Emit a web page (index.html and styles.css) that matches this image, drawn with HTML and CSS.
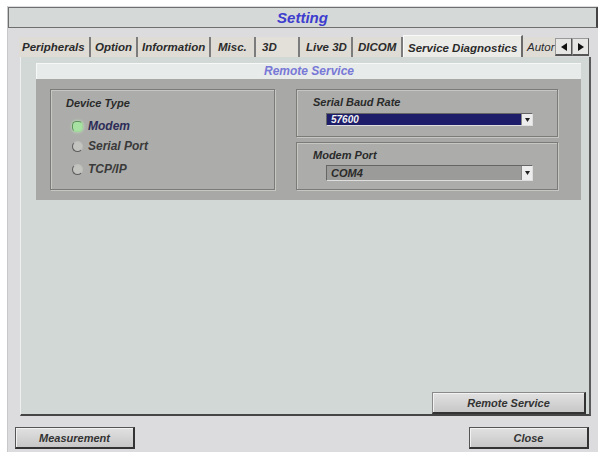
FILE: index.html
```html
<!DOCTYPE html>
<html lang="en">
<head>
    <meta charset="UTF-8">
    <title>Setting</title>
    <link rel="stylesheet" href="styles.css">
</head>
<body>
    <div class="window">
        <div class="titlebar">Setting</div>

        <div class="tabs">
            <div class="tab tab-peripherals">Peripherals</div>
            <div class="tab tab-option">Option</div>
            <div class="tab tab-information">Information</div>
            <div class="tab tab-misc">Misc.</div>
            <div class="tab tab-3d">3D</div>
            <div class="tab tab-live">Live 3D</div>
            <div class="tab tab-dicom">DICOM</div>
            <div class="tab tab-service active">Service Diagnostics</div>
            <div class="tab tab-auto">Autor</div>
            <div class="tab-arrow">
                <svg width="6" height="8" viewBox="0 0 6 8"><path d="M6 0 L0 4 L6 8 Z" fill="#111"/></svg>
            </div>
            <div class="tab-arrow">
                <svg width="6" height="8" viewBox="0 0 6 8"><path d="M0 0 L6 4 L0 8 Z" fill="#111"/></svg>
            </div>
        </div>

        <div class="page">
            <div class="group">
                <div class="group-title">Remote Service</div>
                <div class="group-body">
                    <div class="box device-box">
                        <div class="box-label">Device Type</div>
                        <div class="radio-list">
                            <div class="radio-row selected"><span class="radio on"></span>Modem</div>
                            <div class="radio-row"><span class="radio"></span>Serial Port</div>
                            <div class="radio-row"><span class="radio"></span>TCP/IP</div>
                        </div>
                    </div>
                    <div class="right-col">
                        <div class="box field-box">
                            <div class="box-label">Serial Baud Rate</div>
                            <div class="select select-dark">
                                <span class="select-value">57600</span>
                                <span class="select-btn">
                                    <svg width="5" height="4" viewBox="0 0 5 4"><path d="M0 0 L5 0 L2.5 4 Z" fill="#222"/></svg>
                                </span>
                            </div>
                        </div>
                        <div class="box field-box">
                            <div class="box-label">Modem Port</div>
                            <div class="select select-gray">
                                <span class="select-value">COM4</span>
                                <span class="select-btn">
                                    <svg width="5" height="4" viewBox="0 0 5 4"><path d="M0 0 L5 0 L2.5 4 Z" fill="#222"/></svg>
                                </span>
                            </div>
                        </div>
                    </div>
                </div>
            </div>
            <button class="btn btn-remote">Remote Service</button>
        </div>

        <div class="footer">
            <button class="btn btn-foot">Measurement</button>
            <button class="btn btn-foot">Close</button>
        </div>
    </div>
</body>
</html>
```

FILE: styles.css
```css
body {
    margin: 0;
    background: #ffffff;
    font-family: "Liberation Sans", Arial, sans-serif;
    font-style: italic;
    font-weight: bold;
    color: #2e2e2e;
}
.window {
    margin: 6px 0 0 7px;
    width: 591px;
    height: 446px;
    box-sizing: border-box;
    background: #dcdcdf;
    border-left: 1px solid #c8c8cb;
    display: flex;
    flex-direction: column;
}
.titlebar {
    height: 21px;
    margin-top: 1px;
    box-sizing: border-box;
    background: #d5d9d8;
    border: 1px solid #6e6e6e;
    border-right: 2px solid #444444;
    text-align: center;
    font-size: 15px;
    line-height: 19px;
    color: #3d3dce;
}

/* tab strip */
.tabs {
    display: flex;
    height: 20px;
    margin-top: 9px;
    padding-left: 11px;
}
.tab {
    box-sizing: border-box;
    height: 20px;
    padding-left: 4px;
    background: #dfdcd6;
    border-right: 2px solid #7c7c7c;
    font-size: 11.5px;
    line-height: 21px;
    white-space: nowrap;
    overflow: hidden;
    color: #2b2b2b;
}
.tab.active {
    height: 22px;
    margin-top: -2px;
    line-height: 24px;
    padding-left: 4px;
    background: #ebebe8;
    border-top: 1px solid #fafafa;
    border-left: 1px solid #fafafa;
    border-right: 2px solid #6a6a6a;
}
.tab-peripherals { width: 72px; padding-left: 3px; }
.tab-option { width: 47px; }
.tab-information { width: 73px; }
.tab-misc { width: 45px; padding-left: 7px; }
.tab-3d { width: 44px; padding-left: 6px; background: #e3e0da; }
.tab-live { width: 53px; padding-left: 6px; }
.tab-dicom { width: 50px; padding-left: 5px; }
.tab-service { width: 120px; }
.tab-auto { width: 32px; border-right: none; font-weight: normal; }
.tab-arrow {
    box-sizing: border-box;
    width: 17px;
    height: 18px;
    margin-top: 1px;
    display: flex;
    align-items: center;
    justify-content: center;
    background: #e6e6e4;
    border: 1px solid #9a9a9a;
    border-right-color: #555555;
    border-bottom: 2px solid #555555;
}

/* tab page */
.page {
    flex: 1;
    margin: 0 7px 0 12px;
    padding: 6px 3px 0 15px;
    box-sizing: border-box;
    background: #d2d8d6;
    border-left: 1px solid #eef0ef;
    border-right: 2px solid #5a5a5a;
    border-bottom: 2px solid #454545;
    display: flex;
    flex-direction: column;
}
.group {
    margin-right: 5px;
}
.group-title {
    height: 16px;
    box-sizing: border-box;
    background: #e7ebea;
    border-top: 1px solid #f6f8f7;
    border-left: 1px solid #f6f8f7;
    text-align: center;
    font-size: 12px;
    line-height: 15px;
    color: #7878d6;
}
.group-body {
    display: flex;
    gap: 21px;
    padding: 10px 23px 10px 14px;
    background: #a8a9a6;
}
.box {
    box-sizing: border-box;
    background: #acadaa;
    border: 1px solid #7b7b79;
    box-shadow: inset 1px 1px 0 #c6c6c3, 1px 1px 0 #c6c6c3;
}
.box-label {
    font-size: 11px;
    line-height: 13px;
    color: #2a2a2a;
}
.device-box {
    width: 225px;
    height: 101px;
    padding: 7px 0 0 15px;
}
.radio-list {
    display: flex;
    flex-direction: column;
    margin: 6px 0 0 6px;
}
.radio-row {
    display: flex;
    align-items: center;
    gap: 5px;
    height: 20px;
    font-size: 12px;
    color: #3a3a3a;
}
.radio-row:last-child {
    margin-top: 3px;
}
.radio-row.selected {
    color: #2c2c58;
}
.radio {
    width: 9px;
    height: 9px;
    border-radius: 50%;
    background: #c3c3c0;
    border: 1px solid #bdbdba;
    border-left-color: #5e5e5e;
    border-bottom-color: #5e5e5e;
}
.radio.on {
    background: #a8e2a2;
    border-color: #5f915f #9fd59a #9fd59a #5f915f;
    box-shadow: 0 0 3px #c4f0bd;
    border-radius: 40%;
}
.right-col {
    display: flex;
    flex-direction: column;
    gap: 5px;
}
.field-box {
    width: 262px;
    height: 48px;
    padding: 6px 0 0 16px;
}
.select {
    display: flex;
    align-items: center;
    justify-content: space-between;
    width: 207px;
    margin: 4px 0 0 13px;
    box-sizing: border-box;
    border-top: 1px solid #666;
    border-left: 1px solid #666;
    border-bottom: 1px solid #dedede;
    border-right: 1px solid #dedede;
}
.select-dark {
    height: 13px;
    background: #1d1d6a;
    color: #f2f2f2;
}
.select-gray {
    height: 16px;
    margin-top: 3px;
    background: #9b9c99;
    color: #2a2a2a;
}
.select-value {
    padding-left: 4px;
    font-size: 11px;
}
.select-dark .select-value {
    font-size: 10px;
}
.select-btn {
    width: 11px;
    height: 100%;
    box-sizing: border-box;
    display: flex;
    align-items: center;
    justify-content: center;
    background: #ededed;
    border-left: 1px solid #888;
}

/* buttons */
.btn {
    box-sizing: border-box;
    height: 22px;
    padding: 0;
    font-family: "Liberation Sans", Arial, sans-serif;
    font-style: italic;
    font-weight: bold;
    font-size: 11px;
    color: #333333;
    background: linear-gradient(#e1e1e1, #c7c7c7);
    border: 1px solid #555555;
    border-right: 2px solid #333333;
    border-bottom: 2px solid #333333;
    box-shadow: inset 1px 1px 0 #f2f2f2;
}
.btn-remote {
    align-self: flex-end;
    width: 154px;
    margin-top: auto;
    border-top-color: #8a8a8a;
    border-left-color: #8a8a8a;
}
.footer {
    display: flex;
    justify-content: space-between;
    height: 36px;
    box-sizing: border-box;
    padding: 11px 9px 0 7px;
}
.btn-foot {
    width: 120px;
}
```
